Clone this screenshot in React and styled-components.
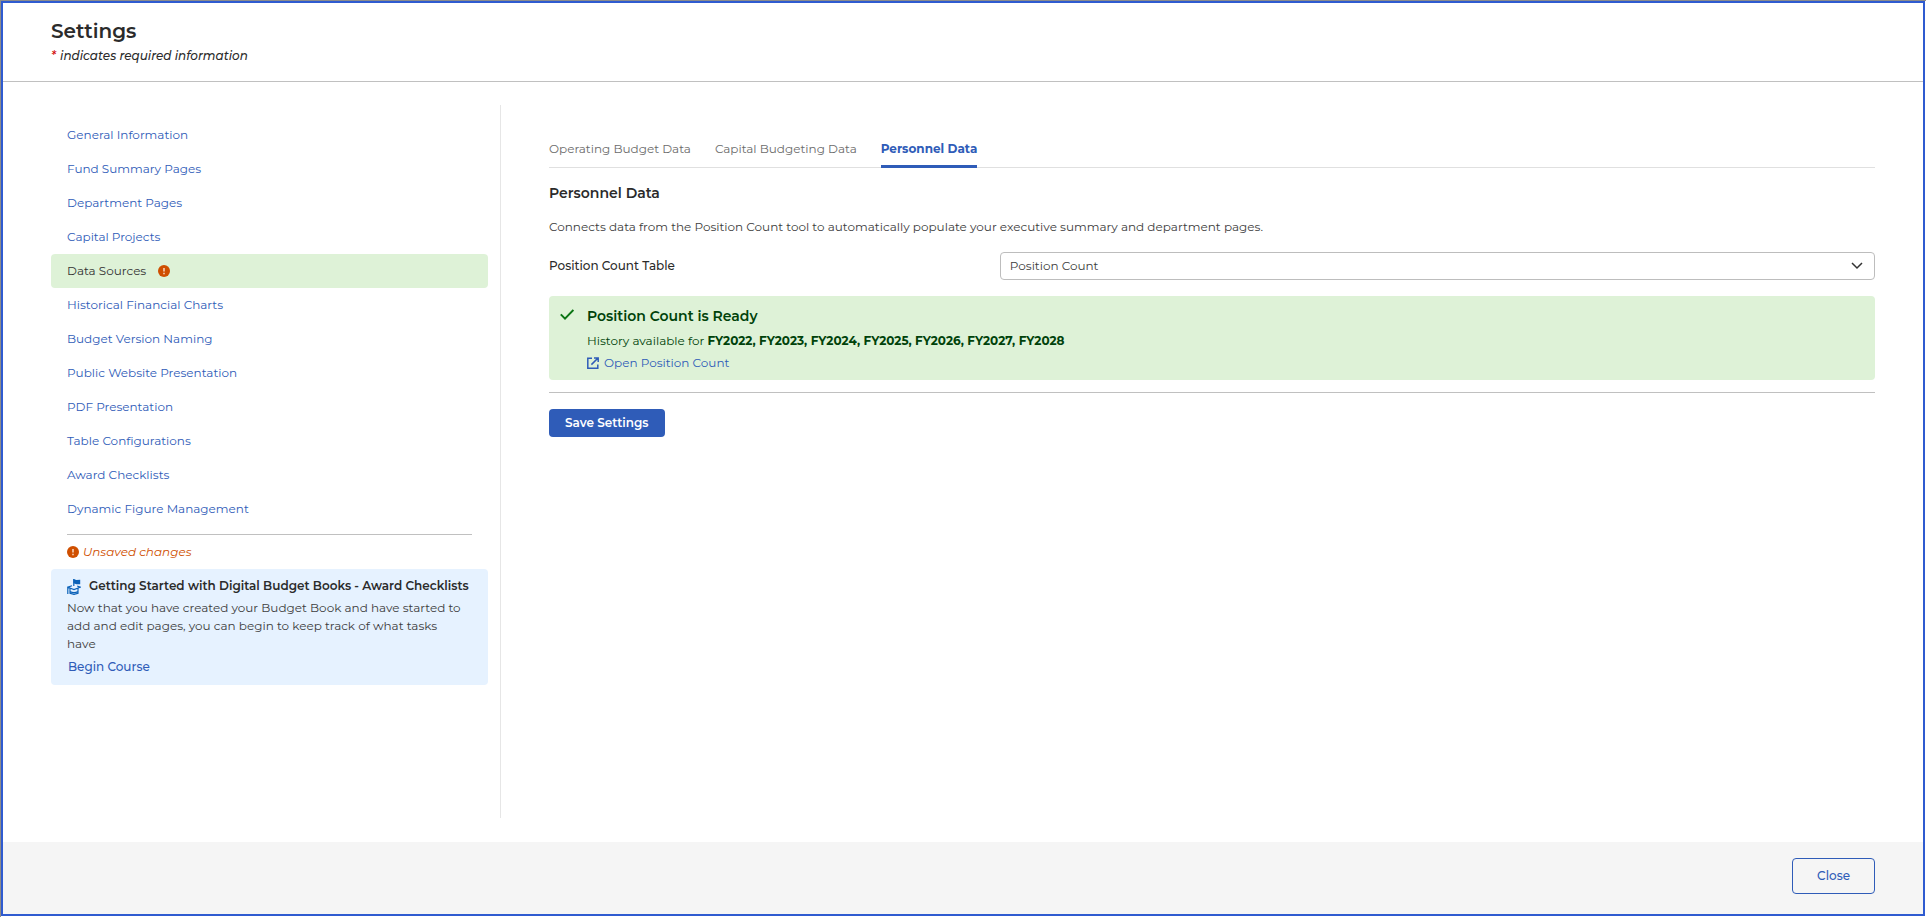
import React, { useState } from 'react';
import styled, { createGlobalStyle } from 'styled-components';

const sections = [
    'General Information',
    'Fund Summary Pages',
    'Department Pages',
    'Capital Projects',
    'Data Sources',
    'Historical Financial Charts',
    'Budget Version Naming',
    'Public Website Presentation',
    'PDF Presentation',
    'Table Configurations',
    'Award Checklists',
    'Dynamic Figure Management',
];

const tabs = ['Operating Budget Data', 'Capital Budgeting Data', 'Personnel Data'];

const AlertIcon = () => (
    <svg width="12" height="12" viewBox="0 0 12 12" aria-hidden="true">
        <circle cx="6" cy="6" r="6" fill="#cf4f00" />
        <path d="M6 3v3.4M6 7.8v1.4" stroke="#fbe3d3" strokeWidth="1.4" />
    </svg>
);

const CheckIcon = () => (
    <svg width="14" height="11" viewBox="0 0 14 11" aria-hidden="true">
        <path d="M.8 5.4l4.2 4.2L13.4 1" fill="none" stroke="#0b7514" strokeWidth="2" />
    </svg>
);

const OpenIcon = () => (
    <svg width="12" height="12" viewBox="0 0 12 12" fill="none" stroke="#2f5cb8" strokeWidth="1.5" aria-hidden="true">
        <path d="M5 1.2H.8v10h10V7.4M7 .9h4.2V5M11 1L4.4 7.6" />
    </svg>
);

const CourseIcon = () => (
    <svg width="14" height="16" viewBox="0 0 14 16" fill="none" stroke="#0c62b8" strokeWidth="1.2" aria-hidden="true">
        <path d="M6.8 7V0" />
        <path d="M6.4 0l3 1 3.8-.2v4.4l-3.6.1-3.2-1z" fill="#0c62b8" stroke="none" />
        <path d="M5 6.8L.8 8.2 7 10.6l6.2-2.4-3-1.2M.8 8.2V15M3 9.4v4.8l4 1.2 4-1.2V9.4M3 12.6c2.5 1.2 5.5 1.2 8 0" />
    </svg>
);

const App = () => {
    const [section, setSection] = useState('Data Sources');
    const [tab, setTab] = useState('Personnel Data');

    return (
        <Page>
            <GlobalStyle />
            <Dialog>
                <Header>
                    <Title>Settings</Title>
                    <Required><span>*</span> indicates required information</Required>
                </Header>
                <Body>
                    <Sidebar>
                        <nav>
                            {sections.map((name) => (
                                <NavLink
                                    href="#"
                                    key={name}
                                    $active={name === section}
                                    onClick={() => setSection(name)}
                                >
                                    {name}
                                    {name === 'Data Sources' && <AlertIcon />}
                                </NavLink>
                            ))}
                        </nav>
                        <NavRule />
                        <Unsaved><AlertIcon />Unsaved changes</Unsaved>
                        <Course>
                            <CourseTitle><CourseIcon />Getting Started with Digital Budget Books - Award Checklists</CourseTitle>
                            <CourseText>Now that you have created your Budget Book and have started to add and edit pages, you can begin to keep track of what tasks have</CourseText>
                            <CourseButton type="button">Begin Course</CourseButton>
                        </Course>
                    </Sidebar>
                    <Content>
                        <TabList role="tablist">
                            {tabs.map((name) => (
                                <Tab
                                    type="button"
                                    role="tab"
                                    key={name}
                                    aria-selected={name === tab}
                                    $active={name === tab}
                                    onClick={() => setTab(name)}
                                >
                                    {name}
                                </Tab>
                            ))}
                        </TabList>
                        <Heading>Personnel Data</Heading>
                        <Description>Connects data from the Position Count tool to automatically populate your executive summary and department pages.</Description>
                        <Field>
                            <label htmlFor="table">Position Count Table</label>
                            <SelectWrap>
                                <Select id="table" defaultValue="count">
                                    <option value="count">Position Count</option>
                                </Select>
                                <svg width="12" height="8" viewBox="0 0 12 8" aria-hidden="true">
                                    <path d="M1 1l5 5 5-5" fill="none" stroke="#333" strokeWidth="1.5" />
                                </svg>
                            </SelectWrap>
                        </Field>
                        <Ready>
                            <CheckIcon />
                            <div>
                                <ReadyTitle>Position Count is Ready</ReadyTitle>
                                <History>History available for <b>FY2022, FY2023, FY2024, FY2025, FY2026, FY2027, FY2028</b></History>
                                <OpenLink href="#"><OpenIcon />Open Position Count</OpenLink>
                            </div>
                        </Ready>
                        <Rule />
                        <SaveButton type="button">Save Settings</SaveButton>
                    </Content>
                </Body>
                <Footer>
                    <CloseButton type="button">Close</CloseButton>
                </Footer>
            </Dialog>
        </Page>
    );
};

const GlobalStyle = createGlobalStyle`
    * {
        box-sizing: border-box;
    }
    body {
        margin: 0;
        color: #3d3d3d;
        font: 12px/18px Montserrat, Inter, "Liberation Sans", sans-serif;
    }
    h1, h2, h3, p {
        margin: 0;
    }
    a {
        text-decoration: none;
    }
    button, select {
        font: inherit;
    }
    button {
        cursor: pointer;
    }
    svg {
        flex: none;
    }
`;

const Page = styled.div`
    min-height: 100vh;
    display: flex;
    padding: 0 1px 1px 0;
    border: solid #8c8c8c;
    border-width: 1px 0 0 1px;
    background: #fff;
`;

const Dialog = styled.main`
    flex: 1;
    display: flex;
    flex-direction: column;
    border: 2px solid #2f5bd0;
    background: #fff;
`;

const Header = styled.header`
    padding: 14px 48px 16px;
    border-bottom: 1px solid #c0c0c0;
`;

const Title = styled.h1`
    color: #2b2b2b;
    font-size: 20px;
    font-weight: 600;
    line-height: 28px;
`;

const Required = styled.p`
    padding: 2px 0 0;
    color: #2b2b2b;
    font-style: italic;
    font-weight: 500;
    & span {
        margin-right: 1px;
        color: #d00000;
    }
`;

const Body = styled.div`
    flex: 1;
    display: flex;
    padding: 23px 48px 24px;
`;

const Sidebar = styled.aside`
    width: 450px;
    padding: 13px 12px 0 0;
    border-right: 1px solid #e6e6e6;
`;

const NavLink = styled.a`
    display: flex;
    align-items: center;
    gap: 12px;
    height: 34px;
    padding: 0 16px;
    border-radius: 4px;
    background: ${(props) => (props.$active ? '#def2d7' : 'transparent')};
    color: ${(props) => (props.$active ? '#333' : '#2f5cb8')};
`;

const NavRule = styled.hr`
    margin: 8px 16px 0;
    border: 0;
    border-top: 1px solid #c0c0c0;
`;

const Unsaved = styled.p`
    display: flex;
    align-items: center;
    gap: 4px;
    height: 34px;
    padding: 0 16px;
    color: #cf4f00;
    font-style: italic;
`;

const Course = styled.section`
    padding: 8px 16px;
    border-radius: 4px;
    background: #e6f2ff;
`;

const CourseTitle = styled.h3`
    display: flex;
    align-items: flex-end;
    gap: 8px;
    margin-bottom: 4px;
    color: #2b2b2b;
    font-size: 12px;
    font-weight: 600;
    white-space: nowrap;
`;

const CourseText = styled.p`
    padding-right: 8px;
`;

const CourseButton = styled.button`
    display: block;
    height: 20px;
    margin-top: 4px;
    padding: 0 1px;
    border: 0;
    background: none;
    color: #2f5cb8;
    font-weight: 500;
`;

const Content = styled.section`
    flex: 1;
    padding: 25px 0 0 48px;
`;

const TabList = styled.div`
    display: flex;
    gap: 24px;
    height: 38px;
    border-bottom: 1px solid #e0e0e0;
`;

const Tab = styled.button`
    height: 38px;
    padding: 3px 0 0;
    border: 0;
    border-bottom: 3px solid ${(props) => (props.$active ? '#2f5cb8' : 'transparent')};
    background: none;
    color: ${(props) => (props.$active ? '#2f5cb8' : '#6b6b6b')};
    font-weight: ${(props) => (props.$active ? 700 : 400)};
`;

const Heading = styled.h2`
    margin-top: 15px;
    color: #2b2b2b;
    font-size: 14px;
    font-weight: 600;
    line-height: 20px;
`;

const Description = styled.p`
    margin: 15px 0 16px;
`;

const Field = styled.div`
    display: flex;
    align-items: center;
    & label {
        width: 34%;
        color: #2b2b2b;
        font-weight: 500;
    }
`;

const SelectWrap = styled.div`
    position: relative;
    flex: 1;
    & svg {
        position: absolute;
        top: 10px;
        right: 12px;
        pointer-events: none;
    }
`;

const Select = styled.select`
    display: block;
    width: 100%;
    height: 28px;
    padding: 0 32px 0 9px;
    border: 1px solid #bdbdbd;
    border-radius: 4px;
    background: #fff;
    color: #3d3d3d;
    appearance: none;
`;

const Ready = styled.div`
    display: flex;
    gap: 13px;
    margin-top: 16px;
    padding: 10px 11px 8px;
    border-radius: 4px;
    background: #def2d7;
    color: #00420a;
    & > svg {
        margin-top: 3px;
    }
`;

const ReadyTitle = styled.h3`
    font-size: 14px;
    font-weight: 600;
    line-height: 20px;
`;

const History = styled.p`
    margin: 6px 0 4px;
`;

const OpenLink = styled.a`
    display: flex;
    align-items: center;
    gap: 5px;
    color: #2f5cb8;
`;

const Rule = styled.hr`
    margin: 12px 0 16px;
    border: 0;
    border-top: 1px solid #c0c0c0;
`;

const SaveButton = styled.button`
    height: 28px;
    padding: 0 16px;
    border: 0;
    border-radius: 4px;
    background: #2f5cb8;
    color: #fff;
    font-weight: 600;
`;

const Footer = styled.footer`
    display: flex;
    justify-content: flex-end;
    padding: 16px 48px 20px;
    background: #f5f5f5;
`;

const CloseButton = styled.button`
    height: 36px;
    padding: 0 24px;
    border: 1px solid #2f5cb8;
    border-radius: 4px;
    background: transparent;
    color: #2f5cb8;
    font-weight: 500;
`;

export default App;
